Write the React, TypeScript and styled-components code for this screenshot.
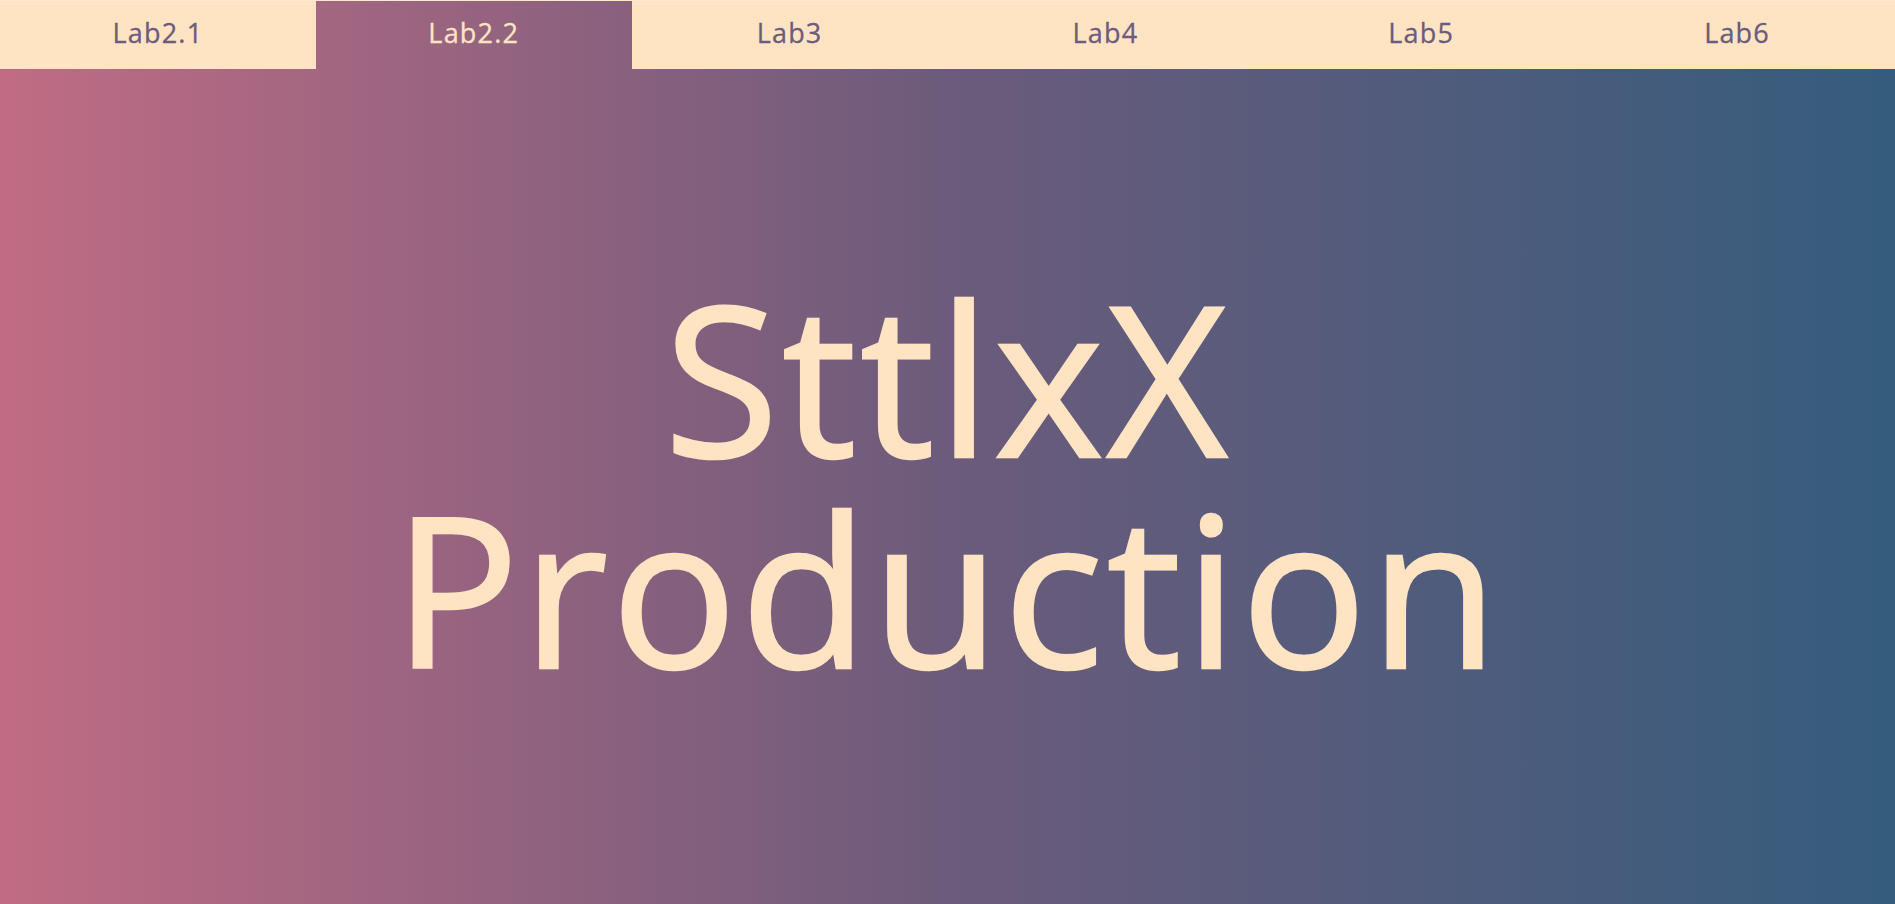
import React from "react";
import styled, { createGlobalStyle } from "styled-components";

const Global = createGlobalStyle`
  html, body {
    margin: 0;
    padding: 0;
    height: 100%;
  }
  body {
    background: linear-gradient(to right, #c06c84, #6c5b7b, #355c7d);
    font-family: "Open Sans", "Noto Sans", sans-serif;
    overflow: hidden;
  }
  #root {
    height: 100%;
  }
`;

const Page = styled.div`
  display: flex;
  flex-direction: column;
  height: 904px;
`;

const Nav = styled.nav`
  display: flex;
  height: 69px;
  flex-shrink: 0;
  border-top: 1px solid #ffe9cf;
  box-sizing: border-box;
`;

const Tab = styled.a<{ $active?: boolean }>`
  flex: 1;
  display: flex;
  align-items: center;
  justify-content: center;
  padding-bottom: 6px;
  background: ${(p) => (p.$active ? "transparent" : "#ffe4c4")};
  color: ${(p) => (p.$active ? "#ffe4c4" : "#6c5b7b")};
  font-size: 27px;
  font-weight: 500;
  letter-spacing: 1.2px;
  -webkit-text-stroke: 0.3px currentColor;
  text-decoration: none;
  cursor: pointer;
`;

const Hero = styled.main`
  flex: 1;
  display: flex;
  align-items: center;
  justify-content: center;
  padding-bottom: 10px;
`;

const Title = styled.h1`
  margin: 0;
  display: flex;
  flex-direction: column;
  align-items: center;
  color: #ffe4c4;
  font-weight: 500;
`;

const Line = styled.span`
  display: block;
  font-size: 209px;
  line-height: 211px;
  letter-spacing: 3.4px;
  white-space: nowrap;
  -webkit-text-stroke: 2.5px #ffe4c4;
`;

const tabs = ["Lab2.1", "Lab2.2", "Lab3", "Lab4", "Lab5", "Lab6"];

export default function App() {
  return (
    <>
      <Global />
      <Page>
        <Nav>
          {tabs.map((t) => (
            <Tab key={t} $active={t === "Lab2.2"}>
              {t}
            </Tab>
          ))}
        </Nav>
        <Hero>
          <Title>
            <Line>SttlxX</Line>
            <Line>Production</Line>
          </Title>
        </Hero>
      </Page>
    </>
  );
}
